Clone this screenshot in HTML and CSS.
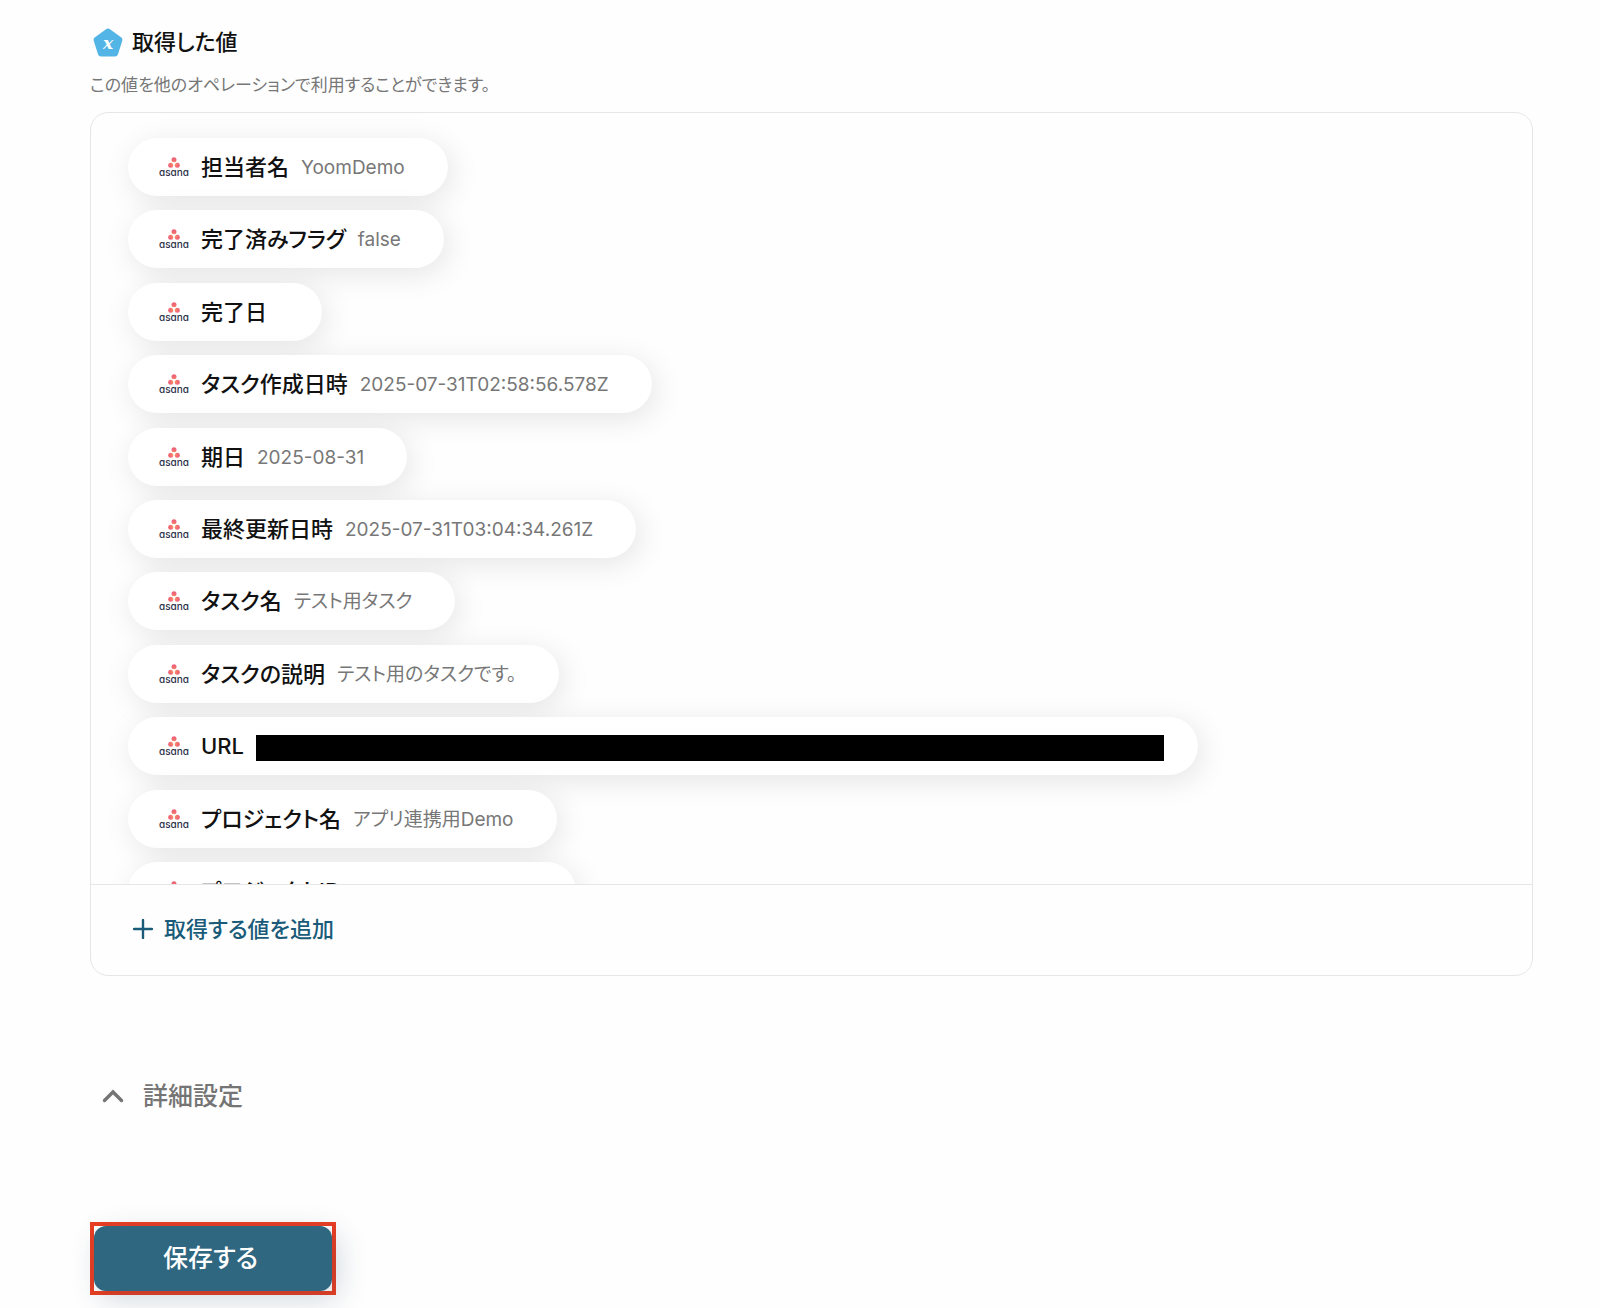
FILE: index.html
```
<!DOCTYPE html>
<html lang="ja">
<head>
    <meta charset="UTF-8">
    <meta name="viewport" content="width=device-width, initial-scale=1.0">
    <title>取得した値</title>
    <link rel="stylesheet" href="styles.css">
</head>
<body>

<main class="page">
    <section class="values">
        <header class="values-header">
            <svg class="values-icon" viewBox="0 0 30 30" aria-hidden="true">
                <path d="M13 1.3a3.2 3.2 0 0 1 4 0l11 8a3.2 3.2 0 0 1 1.2 3.7l-4.2 13.2a3.2 3.2 0 0 1-3 2.3H8a3.2 3.2 0 0 1-3-2.3L.8 13A3.2 3.2 0 0 1 2 9.3z" fill="#52b5e5"/>
                <text class="values-icon-x" x="15" y="21" text-anchor="middle">x</text>
            </svg>
            <h1>取得した値</h1>
        </header>
        <p class="values-note">この値を他のオペレーションで利用することができます。</p>

        <div class="card">
            <div class="card-scroll">
                <ul class="pills">
                    <li class="pill">
                        <!-- the other pills reuse this logo -->
                        <svg class="logo" viewBox="0 0 30 20">
                            <defs>
                                <radialGradient id="asanaDots" gradientUnits="userSpaceOnUse" cx="15" cy="7" r="8">
                                    <stop offset="0" stop-color="#fda45c"/>
                                    <stop offset="0.5" stop-color="#f06a74"/>
                                    <stop offset="1" stop-color="#ee5b74"/>
                                </radialGradient>
                            </defs>
                            <g id="asana">
                                <g fill="url(#asanaDots)">
                                    <circle cx="15" cy="2.8" r="2.5"/>
                                    <circle cx="11.7" cy="8.2" r="2.5"/>
                                    <circle cx="18.3" cy="8.2" r="2.5"/>
                                </g>
                                <text class="asana-word" x="15" y="19" text-anchor="middle">asana</text>
                            </g>
                        </svg>
                        <span class="label">担当者名</span><span class="value">YoomDemo</span>
                    </li>
                    <li class="pill"><svg class="logo" viewBox="0 0 30 20"><use href="#asana"/></svg><span class="label">完了済みフラグ</span><span class="value">false</span></li>
                    <li class="pill"><svg class="logo" viewBox="0 0 30 20"><use href="#asana"/></svg><span class="label">完了日</span><span class="value"></span></li>
                    <li class="pill"><svg class="logo" viewBox="0 0 30 20"><use href="#asana"/></svg><span class="label">タスク作成日時</span><span class="value">2025-07-31T02:58:56.578Z</span></li>
                    <li class="pill"><svg class="logo" viewBox="0 0 30 20"><use href="#asana"/></svg><span class="label">期日</span><span class="value">2025-08-31</span></li>
                    <li class="pill"><svg class="logo" viewBox="0 0 30 20"><use href="#asana"/></svg><span class="label">最終更新日時</span><span class="value">2025-07-31T03:04:34.261Z</span></li>
                    <li class="pill"><svg class="logo" viewBox="0 0 30 20"><use href="#asana"/></svg><span class="label">タスク名</span><span class="value">テスト用タスク</span></li>
                    <li class="pill"><svg class="logo" viewBox="0 0 30 20"><use href="#asana"/></svg><span class="label">タスクの説明</span><span class="value">テスト用のタスクです。</span></li>
                    <li class="pill pill-masked"><svg class="logo" viewBox="0 0 30 20"><use href="#asana"/></svg><span class="label">URL</span><span class="mask"></span></li>
                    <li class="pill"><svg class="logo" viewBox="0 0 30 20"><use href="#asana"/></svg><span class="label">プロジェクト名</span><span class="value">アプリ連携用Demo</span></li>
                    <li class="pill"><svg class="logo" viewBox="0 0 30 20"><use href="#asana"/></svg><span class="label">プロジェクトID</span><span class="value">1208613272949846</span></li>
                </ul>
            </div>
            <div class="card-footer">
                <button type="button" class="add-button">
                    <svg class="plus" viewBox="0 0 20 20" aria-hidden="true"><path d="M10 1v18M1 10h18"/></svg>
                    取得する値を追加
                </button>
            </div>
        </div>
    </section>

    <button type="button" class="details-button">
        <svg class="chevron" viewBox="0 0 22 14" aria-hidden="true"><path d="M2.5 11.5L11 3l8.5 8.5"/></svg>
        詳細設定
    </button>

    <div class="save-frame">
        <button type="submit" class="save-button">保存する</button>
    </div>
</main>

</body>
</html>
```
FILE: styles.css
```
body {
    margin: 0;
    background-color: #fefefe;
    color: #111;
    font-family: Inter, "Noto Sans CJK JP", sans-serif;
    font-feature-settings: "palt";
}

button {
    border: none;
    background: none;
    padding: 0;
    font: inherit;
    font-feature-settings: inherit;
    cursor: pointer;
}

.page {
    padding: 26px 67px 13px 90px;
}

.values-header {
    display: flex;
    align-items: flex-end;
    gap: 9px;
    padding-left: 3px;
}

.values-header h1 {
    margin: 0;
    font-size: 22px;
    font-weight: 500;
    line-height: 32px;
}

.values-icon {
    width: 30px;
    height: 30px;
}

.values-icon-x {
    fill: #fff;
    font-family: "DejaVu Serif", serif;
    font-size: 17px;
    font-style: italic;
    font-weight: bold;
}

.values-note {
    margin: 14px 0;
    color: #777;
    font-size: 17px;
    line-height: 26px;
}

.card {
    border: 1px solid #e6e6e6;
    border-radius: 18px;
}

.card-scroll {
    height: 771px;
    overflow: hidden;
    border-bottom: 1px solid #e6e6e6;
    border-radius: 18px 18px 0 0;
}

.pills {
    display: flex;
    flex-direction: column;
    align-items: flex-start;
    justify-content: space-between;
    height: 782px;
    margin: 0;
    padding: 25px 37px;
    list-style: none;
}

.pill {
    display: flex;
    align-items: center;
    gap: 12px;
    height: 58px;
    padding: 0 43px 0 31px;
    border-radius: 29px;
    background-color: #fff;
    box-shadow: 4px 6px 30px rgba(0, 0, 0, 0.1);
    white-space: nowrap;
}

.pill-masked {
    padding-right: 34px;
}

.logo {
    width: 30px;
    height: 20px;
}

.asana-word {
    fill: #2b3048;
    font-family: Inter, sans-serif;
    font-size: 10px;
    font-weight: 500;
    font-feature-settings: "cv11";
}

.label {
    font-size: 22px;
    font-weight: 500;
    line-height: 32px;
}

.value {
    padding-top: 2px;
    color: #777;
    font-size: 19px;
    line-height: 32px;
}

.mask {
    width: 908px;
    height: 26px;
    margin-top: 4px;
    background-color: #000;
}

.card-footer {
    padding: 28px 42px 30px;
}

.add-button {
    display: flex;
    align-items: center;
    gap: 11px;
    color: #1a5b7a;
    font-size: 22px;
    font-weight: 500;
    line-height: 32px;
}

.plus {
    width: 20px;
    height: 20px;
    fill: none;
    stroke: currentColor;
    stroke-width: 2.4;
    stroke-linecap: round;
}

.details-button {
    display: flex;
    align-items: center;
    gap: 19px;
    margin-top: 102px;
    padding-left: 12px;
    color: #757575;
    font-size: 25px;
    font-weight: 500;
    line-height: 36px;
}

.chevron {
    width: 22px;
    height: 14px;
    fill: none;
    stroke: currentColor;
    stroke-width: 3.4;
    stroke-linecap: round;
}

.save-frame {
    display: inline-block;
    margin-top: 108px;
    border: 4px solid #e93e23;
}

.save-button {
    display: block;
    min-width: 238px;
    padding-right: 5px;
    border-radius: 12px;
    background-color: #2f6680;
    box-shadow: 6px 8px 30px rgba(26, 60, 80, 0.2);
    color: #fff;
    font-size: 25px;
    font-weight: 500;
    line-height: 65px;
}
```
